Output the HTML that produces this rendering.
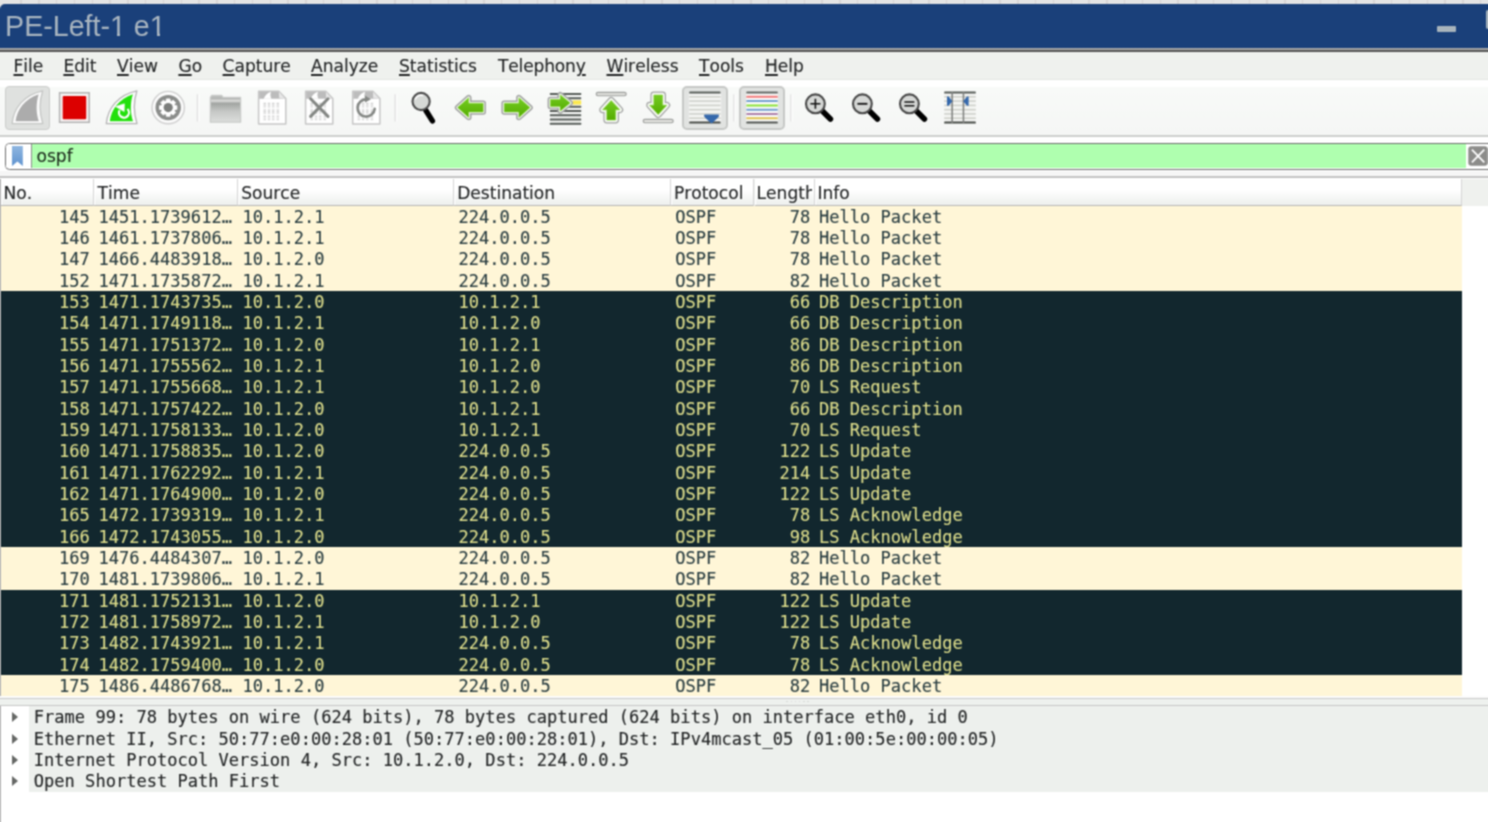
<!DOCTYPE html>
<html lang="en"><head><meta charset="utf-8"><title>PE-Left-1 e1</title>
<style>
html,body{margin:0;padding:0;}
body{width:1488px;height:822px;overflow:hidden;background:#fff;position:relative;font-family:"DejaVu Sans","Liberation Sans",sans-serif;color:#1f2223;}
#ruler{position:absolute;left:0;top:0;width:1488px;height:10px;background:#e4e4e4;background-image:repeating-linear-gradient(90deg,transparent 0,transparent 16.4px,#d8d5d5 16.4px,#d8d5d5 17.8px);background-position:4px 0;}
#titlebar{position:absolute;left:0;top:3.6px;width:1488px;height:44.8px;background:#1a407a;border-top-left-radius:5px;}
#title{position:absolute;left:5.1px;top:5.2px;font-family:"Liberation Sans",sans-serif;font-size:28.6px;line-height:34px;transform:scaleY(1.06);transform-origin:0 78%;color:#a9b5c0;white-space:nowrap;}
#minbtn{position:absolute;left:1437px;top:22.2px;width:18.5px;height:6px;background:#a8b4bc;border-radius:1px;}
#maxbtn{position:absolute;left:1486px;top:6.8px;width:10px;height:18.2px;background:#a8b4bc;border-radius:2px;}
#tbline{position:absolute;left:0;top:48.2px;width:1488px;height:4.1px;background:linear-gradient(#a9a9a9,#a0a0a0 40%,#5a5a5a 62%,#505050);}
#menubar{position:absolute;left:0;top:52.3px;width:1488px;height:28.2px;background:#eff1ee;border-bottom:1.3px solid #e3e6e3;box-sizing:border-box;}
.mi{position:absolute;top:1.8px;font-size:17.07px;line-height:24px;white-space:nowrap;color:#222425;}
.mi u{text-decoration:underline;text-underline-offset:2.4px;text-decoration-thickness:1.6px;}
#toolbar{position:absolute;left:0;top:80.5px;width:1488px;height:56.1px;background:linear-gradient(#ffffff,#ffffff 5.5px,#f8faf8 6.5px,#f5f6f5);border-bottom:2.4px solid #cdcfcd;box-sizing:border-box;}
#toolbar .ic{position:absolute;top:11.5px;width:32px;height:32px;}
#toolbar .sep{position:absolute;top:14px;width:1.3px;height:28px;background:#d6d6d6;}
#toolbar .pressed{position:absolute;top:5.8px;width:44.3px;height:43.8px;background:#dfe1df;border:1.4px solid #cbcdcb;border-radius:4px;box-sizing:border-box;}
#toolbar .p2{width:45.5px;background:#e1e3e1;border:2px solid #c6c8c6;border-radius:5px;}
#tbsvg{position:absolute;left:0;top:-0.5px;}
#filterwrap{position:absolute;left:0;top:136.6px;width:1488px;height:39px;background:linear-gradient(#fff,#fff 33.6px,#f6f6f6 33.6px);}
#filter{position:absolute;left:4.7px;top:6.5px;width:1500px;height:27.4px;background:#fff;border:1.5px solid #6c6c6c;border-radius:4.5px;box-sizing:border-box;overflow:hidden;}
#bm{position:absolute;left:0;top:0;width:25.2px;height:24.4px;background:#fff;border-right:1.2px solid #8c8c8c;}
#bm svg{position:absolute;left:6.4px;top:2.3px;}
#fgreen{position:absolute;left:26.4px;top:0;width:1434.4px;height:24.4px;background:#afffaf;}
#ftext{position:absolute;left:4.4px;top:0.4px;font-size:17.07px;line-height:25px;color:#1c2a1c;}
#fclear{position:absolute;left:1462.2px;top:2px;width:20px;height:20px;}
#fclear svg{display:block;}
#hdrline{position:absolute;left:0;top:175.6px;width:1488px;height:2.6px;background:linear-gradient(#c6c6c6,#c0c0c0);}
#hdr{position:absolute;left:0;top:178.7px;width:1488px;height:27px;background:#eff1ee;}
#hdr:before{content:"";position:absolute;left:0;top:0;width:1.3px;height:27px;background:#b5b5b5;z-index:2;}
.hc{position:absolute;top:0;height:27px;background:linear-gradient(#ffffff,#ffffff 42%,#eef0ee 96%);border-right:1.3px solid #d4d4d4;border-bottom:1.6px solid #b6b6b6;box-sizing:border-box;overflow:hidden;white-space:nowrap;box-shadow:inset 1.2px 0 0 #fff;}
.hc span{position:absolute;left:3.6px;top:3.2px;font-size:17.07px;line-height:22px;color:#222425;}
#list{position:absolute;left:0;top:205.67px;width:1488px;height:490.67px;background:#fff;border-left:1.3px solid #b5b5b5;box-sizing:border-box;}
.r{position:relative;height:21.3333px;width:1461px;font-family:"DejaVu Sans Mono","Liberation Mono",monospace;font-size:17.067px;line-height:21.3333px;white-space:nowrap;}
.r.c{background:#fff6d7;color:#283c40;}
.r.d{background:#12272e;color:#dede8c;}
.r span{position:absolute;top:1.1px;}
.no{left:0;width:88.8px;text-align:right;}
.tm{left:97.5px;}
.sr{left:241.5px;}
.ds{left:457.5px;}
.pr{left:674.2px;}
.ln{left:752px;width:57.4px;text-align:right;}
.in{left:818px;}
#split{position:absolute;left:0;top:696.33px;width:1488px;height:9.9px;background:linear-gradient(#fbfbfb 0,#fbfbfb 1.6px,#c9c9c9 1.6px,#c9c9c9 3px,#eef1ee 3px,#eef1ee 8.5px,#c6c6c6 8.5px,#c6c6c6 9.9px);}
#split i{position:absolute;top:4.6px;width:1.4px;height:1.4px;background:#d3d5d3;border-radius:50%;}
#detail{position:absolute;left:0;top:706.2px;width:1488px;height:116px;background:#fff;border-left:1.3px solid #b5b5b5;box-sizing:border-box;}
.dl{position:relative;height:21.3333px;font-family:"DejaVu Sans Mono","Liberation Mono",monospace;font-size:17.067px;line-height:21.3333px;white-space:nowrap;color:#222425;}
.dl span{position:absolute;left:28px;right:0;top:0;height:21.3333px;background:#edf0ed;padding-left:4.8px;padding-top:1.25px;box-sizing:border-box;line-height:21.3333px;}
.tri{position:absolute;left:11.2px;top:6px;width:0;height:0;border-left:6.2px solid #666866;border-top:5.6px solid transparent;border-bottom:5.6px solid transparent;}

#wrap{position:absolute;left:0;top:0;width:1488px;height:822px;overflow:hidden;background:#fff;font-kerning:none;filter:url(#soft);will-change:transform;}

.r,.dl{-webkit-text-stroke:0.12px currentColor;}
.mi,.hc span,#ftext{-webkit-text-stroke:0.12px currentColor;}

#title b{font-weight:normal;position:relative;}
#title b:before,#title b:after{content:"";position:absolute;top:0.818em;height:0.105em;background:#1a407a;}
#title b:before{left:0.03em;width:0.215em;}
#title b:after{left:0.346em;width:0.2em;}

</style></head><body>
<svg width="0" height="0" style="position:absolute"><defs><filter id="soft" x="0" y="0" width="100%" height="100%" color-interpolation-filters="sRGB"><feConvolveMatrix order="3" kernelMatrix="0.0576 0.1248 0.0576 0.1248 0.2704 0.1248 0.0576 0.1248 0.0576" divisor="1" edgeMode="duplicate" preserveAlpha="true"/></filter></defs></svg>
<div id="wrap">
<div id="ruler"></div>
<div id="titlebar"><span id="title">PE-Left-<b>1</b> e<b>1</b></span><div id="minbtn"></div><div id="maxbtn"></div></div>
<div id="tbline"></div>
<div id="menubar"><span class="mi" style="left:13.5px"><u>F</u>ile</span><span class="mi" style="left:63.4px"><u>E</u>dit</span><span class="mi" style="left:117px"><u>V</u>iew</span><span class="mi" style="left:178.4px"><u>G</u>o</span><span class="mi" style="left:222.6px"><u>C</u>apture</span><span class="mi" style="left:311px"><u>A</u>nalyze</span><span class="mi" style="left:399px"><u>S</u>tatistics</span><span class="mi" style="left:498px;letter-spacing:-0.16px">Telephon<u>y</u></span><span class="mi" style="left:606.5px"><u>W</u>ireless</span><span class="mi" style="left:699px"><u>T</u>ools</span><span class="mi" style="left:765px"><u>H</u>elp</span></div>
<div id="toolbar"><div class="pressed" style="left:5.4px"></div><div class="pressed p2" style="left:682.3px"></div><div class="pressed p2" style="left:739.2px"></div>
<svg id="tbsvg" width="1488" height="56" viewBox="0 80 1488 56">
<defs>
<linearGradient id="gG" x1="0" y1="0" x2="0" y2="1"><stop offset="0" stop-color="#74cc22"/><stop offset="1" stop-color="#55ac00"/></linearGradient>
<linearGradient id="gF" x1="0" y1="0" x2="0" y2="1"><stop offset="0" stop-color="#bfc1bf"/><stop offset="0.12" stop-color="#b4b6b4"/><stop offset="0.2" stop-color="#dededc"/><stop offset="0.3" stop-color="#a2a5a2"/><stop offset="0.6" stop-color="#c6c8c6"/><stop offset="1" stop-color="#dcdedc"/></linearGradient>
<linearGradient id="gL" x1="0" y1="0" x2="0" y2="1"><stop offset="0" stop-color="#cfd1cf"/><stop offset="1" stop-color="#dfe0df"/></linearGradient>
<path id="fin" d="M12.1 123.7 C13.5 108 24 94.8 42.7 90.8 C39.4 101 39.4 113 42.8 123.7 Z"/>
<path id="fini" d="M15.6 121.2 C16.9 109.5 25 98.8 38.7 94.2 C35.9 103 35.9 113 38.8 121.2 Z"/>
<g id="doc"><path d="M-13.6 -16.3 H6.6 L13.6 -9 V16.3 H-13.6 Z" fill="#fff" stroke="#c6c6c6" stroke-width="1.5" stroke-linejoin="round"/><path d="M-13 -15.8 H6.4 L13 -8.8 H-13 Z" fill="#bcbcbc"/><path d="M-8.5 -8.8 C-7 -12.5 -4.5 -14.8 -1.2 -15.8 C-2 -13.5 -2 -11 -0.8 -8.8 Z" fill="#fff"/><path d="M6.6 -15.8 L7 -9.3 L13 -8.9 Z" fill="#e6e6e6"/></g>
<g id="bits" fill="none" stroke="#d2d2d2" stroke-width="1.1"><path d="M-7.5 -4.8v4.6M-3.2 -4.8v4.6M1 -4.8v4.6M5.6 -4.8v4.6M-7.5 1.6v4.6M-3.2 1.6v4.6M1 1.6v4.6M5.6 1.6v4.6M-7.5 8v4.6M-3.2 8v4.6M1 8v4.6M5.6 8v4.6" stroke-width="2.6" stroke-dasharray="1.2 0.6"/></g>
<g id="mag"><line x1="5.2" y1="5.4" x2="15" y2="15.2" stroke="#000" stroke-width="5.6" stroke-linecap="round"/><circle cx="0" cy="0" r="9.4" fill="#d6d8d6" stroke="#484848" stroke-width="2.1"/></g>
</defs>
<use href="#fin" fill="#fbfbfb" stroke="#c4c6c4" stroke-width="1.3" stroke-linejoin="round"/><use href="#fini" fill="#acacac"/>
<rect x="59.6" y="92.8" width="29.6" height="29.5" fill="#f6f2f2" stroke="#b2b2b2" stroke-width="1.5"/><rect x="62.7" y="96" width="23.5" height="23.2" rx="1" fill="#dc0000"/>
<g transform="translate(94.2,0)"><use href="#fin" fill="#fdfdfd" stroke="#b4b4b4" stroke-width="1.3" stroke-linejoin="round"/><use href="#fini" fill="#22e00c"/></g>
<g fill="none" stroke="#fff" stroke-width="2.2"><path d="M127.4 109 A5 5 0 1 1 119.6 110.2"/></g><path d="M115.6 106.6 L124.4 103.8 L124.2 111.6 L121.4 110 Z" fill="#fff" stroke="#fff" stroke-width="0.6" stroke-linejoin="round"/>
<circle cx="168.2" cy="107.6" r="16.2" fill="#fbfbfb" stroke="#cfcfcf" stroke-width="1.4"/><circle cx="168.2" cy="107.6" r="12.7" fill="#8b8d8b"/>
<path d="M166.43 98.88 L169.97 98.88 L170.24 101.01 L171.42 101.50 L173.12 100.18 L175.62 102.68 L174.30 104.38 L174.79 105.56 L176.92 105.83 L176.92 109.37 L174.79 109.64 L174.30 110.82 L175.62 112.52 L173.12 115.02 L171.42 113.70 L170.24 114.19 L169.97 116.32 L166.43 116.32 L166.16 114.19 L164.98 113.70 L163.28 115.02 L160.78 112.52 L162.10 110.82 L161.61 109.64 L159.48 109.37 L159.48 105.83 L161.61 105.56 L162.10 104.38 L160.78 102.68 L163.28 100.18 L164.98 101.50 L166.16 101.01 Z" fill="#fff" stroke="#fff" stroke-width="0.8" stroke-linejoin="round"/>
<circle cx="168.2" cy="107.6" r="4.6" fill="#7c7e7c"/>
<rect x="196.8" y="94.3" width="1.4" height="27.2" fill="#e0e0e0"/><rect x="198.2" y="94.3" width="1.3" height="27.2" fill="#fdfdfd"/>
<rect x="394.5" y="94.3" width="1.4" height="27.2" fill="#e0e0e0"/><rect x="395.9" y="94.3" width="1.3" height="27.2" fill="#fdfdfd"/>
<rect x="733.1999999999999" y="94.3" width="1.4" height="27.2" fill="#e0e0e0"/><rect x="734.6" y="94.3" width="1.3" height="27.2" fill="#fdfdfd"/>
<rect x="790.1999999999999" y="94.3" width="1.4" height="27.2" fill="#e0e0e0"/><rect x="791.6" y="94.3" width="1.3" height="27.2" fill="#fdfdfd"/>
<path d="M210.4 97.4 L211.8 95.4 H221.6 L223 97.4 H240.6 V122.2 H210.4 Z" fill="url(#gF)" stroke="#c9cbc9" stroke-width="1.3" stroke-linejoin="round"/>
<g transform="translate(272.2,107.6)"><use href="#doc"/><use href="#bits"/></g>
<g transform="translate(319.2,107.6)"><use href="#doc"/><use href="#bits"/><path d="M-8.6 -8.8 L8.8 8.8 M8.8 -8.8 L-8.6 8.8" stroke="#848784" stroke-width="3" stroke-linecap="round" fill="none"/></g>
<g transform="translate(366.3,107.6)"><use href="#doc"/><use href="#bits"/><path d="M8.4 1.2 A8.6 8.6 0 1 1 0.4 -8.2" stroke="#858885" stroke-width="2.6" fill="none" stroke-linecap="round"/><path d="M-1.5 -12 L4.6 -8.4 L-1.2 -5.2 Z" fill="#858885"/></g>
<g transform="translate(421.1,101.5)"><line x1="4.8" y1="9" x2="11.3" y2="19.4" stroke="#000" stroke-width="5.4" stroke-linecap="round"/><circle cx="0" cy="0" r="8.6" fill="#d6d9d6" stroke="#4c4c4c" stroke-width="2.1"/><path d="M-5.6 -2.6 A6.3 6.3 0 0 1 1.6 -6" stroke="#fff" stroke-width="1.4" fill="none" stroke-linecap="round"/></g>
<path d="M457.6 107.6 L468.7 97.7 V103.2 H483.2 V112 H468.7 V117.5 Z" fill="#a2a4a2" stroke="#a2a4a2" stroke-width="5.6" stroke-linejoin="round"/><path d="M457.6 107.6 L468.7 97.7 V103.2 H483.2 V112 H468.7 V117.5 Z" fill="#f6f8f4" stroke="#f6f8f4" stroke-width="2.6" stroke-linejoin="round"/><path d="M457.6 107.6 L468.7 97.7 V103.2 H483.2 V112 H468.7 V117.5 Z" fill="url(#gG)" stroke="#7fd42a" stroke-width="0.5" stroke-linejoin="round"/>
<path d="M530 107.6 L518.9 97.7 V103.2 H504.2 V112 H518.9 V117.5 Z" fill="#a2a4a2" stroke="#a2a4a2" stroke-width="5.6" stroke-linejoin="round"/><path d="M530 107.6 L518.9 97.7 V103.2 H504.2 V112 H518.9 V117.5 Z" fill="#f6f8f4" stroke="#f6f8f4" stroke-width="2.6" stroke-linejoin="round"/><path d="M530 107.6 L518.9 97.7 V103.2 H504.2 V112 H518.9 V117.5 Z" fill="url(#gG)" stroke="#7fd42a" stroke-width="0.5" stroke-linejoin="round"/>
<rect x="549.9" y="92.95" width="31.3" height="2.1" rx="0.6" fill="#565c58"/>
<rect x="549.9" y="97.25" width="31.3" height="2.1" rx="0.6" fill="#565c58"/>
<rect x="549.9" y="105.75" width="31.3" height="2.1" rx="0.6" fill="#565c58"/>
<rect x="549.9" y="109.95" width="31.3" height="2.1" rx="0.6" fill="#565c58"/>
<rect x="549.9" y="114.25" width="31.3" height="2.1" rx="0.6" fill="#565c58"/>
<rect x="549.9" y="118.45" width="31.3" height="2.1" rx="0.6" fill="#565c58"/>
<rect x="549.9" y="122.75" width="31.3" height="2.1" rx="0.6" fill="#565c58"/>
<rect x="572.6" y="100.4" width="8.6" height="4.2" fill="#fce94f"/>
<path d="M570.2 102.9 L560.2 94.8 V99.5 H550.4 V106.5 H560.2 V111 Z" fill="#a2a4a2" stroke="#a2a4a2" stroke-width="5.6" stroke-linejoin="round"/><path d="M570.2 102.9 L560.2 94.8 V99.5 H550.4 V106.5 H560.2 V111 Z" fill="#f6f8f4" stroke="#f6f8f4" stroke-width="2.6" stroke-linejoin="round"/><path d="M570.2 102.9 L560.2 94.8 V99.5 H550.4 V106.5 H560.2 V111 Z" fill="url(#gG)" stroke="#7fd42a" stroke-width="0.5" stroke-linejoin="round"/>
<rect x="596.2" y="92.4" width="30" height="3.4" rx="1.7" fill="#dededa" stroke="#9c9e9c" stroke-width="1.1"/>
<path d="M611.2 100.4 L619.8 109.8 H615.6 V120 H606.8 V109.8 H602.6 Z" fill="#a2a4a2" stroke="#a2a4a2" stroke-width="6.8" stroke-linejoin="round"/><path d="M611.2 100.4 L619.8 109.8 H615.6 V120 H606.8 V109.8 H602.6 Z" fill="#f6f8f4" stroke="#f6f8f4" stroke-width="4.4" stroke-linejoin="round"/><path d="M611.2 100.4 L619.8 109.8 H615.6 V120 H606.8 V109.8 H602.6 Z" fill="url(#gG)" stroke="#7fd42a" stroke-width="0.5" stroke-linejoin="round"/>
<rect x="643.2" y="119.4" width="30" height="3.4" rx="1.7" fill="#e4e4e0" stroke="#9c9e9c" stroke-width="1.1"/>
<path d="M658.2 114.6 L666.8 105.2 H662.6 V95 H653.8 V105.2 H649.6 Z" fill="#a2a4a2" stroke="#a2a4a2" stroke-width="6.8" stroke-linejoin="round"/><path d="M658.2 114.6 L666.8 105.2 H662.6 V95 H653.8 V105.2 H649.6 Z" fill="#f6f8f4" stroke="#f6f8f4" stroke-width="4.4" stroke-linejoin="round"/><path d="M658.2 114.6 L666.8 105.2 H662.6 V95 H653.8 V105.2 H649.6 Z" fill="url(#gG)" stroke="#7fd42a" stroke-width="0.5" stroke-linejoin="round"/>
<rect x="688.8" y="91.4" width="32.4" height="32.4" fill="#f4f5f3"/>
<rect x="689.2" y="96.0" width="31.4" height="1.6" fill="#cfd1cb"/>
<rect x="689.2" y="100.3" width="31.4" height="1.6" fill="#cfd1cb"/>
<rect x="689.2" y="104.60000000000001" width="31.4" height="1.6" fill="#cfd1cb"/>
<rect x="689.2" y="108.9" width="31.4" height="1.6" fill="#cfd1cb"/>
<rect x="689.2" y="113.10000000000001" width="31.4" height="1.6" fill="#cfd1cb"/>
<rect x="689.2" y="117.4" width="31.4" height="1.6" fill="#cfd1cb"/>
<rect x="689.2" y="91.6" width="31.4" height="2" rx="0.6" fill="#555b57"/><rect x="689.2" y="121.6" width="31.4" height="2" rx="0.6" fill="#444844"/>
<path d="M704 115.2 Q704 114.6 705 114.6 H718 Q719 114.6 719 115.4 Q719 116.6 717.8 117.8 L712.5 122.8 Q711.5 123.6 710.5 122.8 L705.2 117.8 Q704 116.6 704 115.2 Z" fill="#3568ab"/>
<rect x="746.3" y="91.4" width="31.5" height="32.4" fill="#fbfbfa"/>
<rect x="746.3" y="91.6" width="31.5" height="2" rx="0.6" fill="#5d635f"/>
<rect x="746.3" y="95.8" width="31.5" height="2" rx="0.6" fill="#f27a7a"/>
<rect x="746.3" y="100.1" width="31.5" height="2" rx="0.6" fill="#729fcf"/>
<rect x="746.3" y="104.4" width="31.5" height="2" rx="0.6" fill="#8ae234"/>
<rect x="746.3" y="108.7" width="31.5" height="2" rx="0.6" fill="#729fcf"/>
<rect x="746.3" y="112.9" width="31.5" height="2" rx="0.6" fill="#ad7fa8"/>
<rect x="746.3" y="117.2" width="31.5" height="2" rx="0.6" fill="#dfc24e"/>
<rect x="746.3" y="121.6" width="31.5" height="2" rx="0.6" fill="#4c504c"/>
<g transform="translate(815.4,103.8)"><use href="#mag"/>
<path d="M-5 0H5M0 -5V5" stroke="#111" stroke-width="1.6" fill="none"/>
</g>
<g transform="translate(862.4,103.8)"><use href="#mag"/>
<path d="M-5 0H5" stroke="#111" stroke-width="1.8" fill="none"/>
</g>
<g transform="translate(909.4,103.8)"><use href="#mag"/>
<path d="M-5 -1.9H5M-5 1.9H5" stroke="#111" stroke-width="1.5" fill="none"/>
</g>
<rect x="944.2" y="91.4" width="31.6" height="32.4" fill="#f4f5f3"/>
<rect x="944.2" y="96.0" width="31.6" height="1.6" fill="#cfd1cb"/>
<rect x="944.2" y="100.3" width="31.6" height="1.6" fill="#cfd1cb"/>
<rect x="944.2" y="104.60000000000001" width="31.6" height="1.6" fill="#cfd1cb"/>
<rect x="944.2" y="108.9" width="31.6" height="1.6" fill="#cfd1cb"/>
<rect x="944.2" y="113.10000000000001" width="31.6" height="1.6" fill="#cfd1cb"/>
<rect x="944.2" y="117.4" width="31.6" height="1.6" fill="#cfd1cb"/>
<rect x="944.2" y="91.6" width="31.6" height="2" rx="0.6" fill="#555b57"/><rect x="944.2" y="121.6" width="31.6" height="2" rx="0.6" fill="#444844"/>
<rect x="951.4" y="92" width="1.5" height="31" fill="#7c7e7c"/><rect x="962.7" y="92" width="1.5" height="31" fill="#7c7e7c"/>
<path d="M947 96.6 H948.6 L952.4 101.2 L948.6 105.8 H947 Z" fill="#3568ab"/><path d="M968.6 96.6 H967 L963.2 101.2 L967 105.8 H968.6 Z" fill="#3568ab"/>
</svg></div>
<div id="filterwrap"><div id="filter"><div id="bm"><svg width="10.8" height="20" viewBox="0 0 10.8 20"><defs><linearGradient id="bmg" x1="0" y1="0" x2="0" y2="1"><stop offset="0" stop-color="#8fb6e0"/><stop offset="1" stop-color="#5f93cf"/></linearGradient></defs><path d="M0 0h10.8v20l-5.4-4.4L0 20z" fill="url(#bmg)"/></svg></div><div id="fgreen"><span id="ftext">ospf</span></div><div id="fclear"><svg width="20" height="20" viewBox="0 0 20 20"><rect x="0.3" y="0.2" width="19.4" height="19.6" rx="3" fill="#8c8c8a"/><path d="M3.9 3.6l12.4 12.8M16.3 3.6l-12.4 12.8" stroke="#fff" stroke-width="1.7" fill="none"/></svg></div></div></div>
<div id="hdrline"></div><div id="hdr"><div class="hc" style="left:1px;width:93px"><span style="left:2.6px">No.</span></div><div class="hc" style="left:94px;width:144px"><span style="left:3.6px">Time</span></div><div class="hc" style="left:238px;width:216px"><span style="left:3.2px">Source</span></div><div class="hc" style="left:454px;width:217.29999999999995px"><span style="left:3.2px">Destination</span></div><div class="hc" style="left:671.3px;width:83.20000000000005px"><span style="left:2.65px">Protocol</span></div><div class="hc" style="left:754.5px;width:60.0px"><span style="left:2.1px;width:55px;overflow:hidden">Length</span></div><div class="hc" style="left:814.5px;width:647.5px"><span style="left:3.0px">Info</span></div></div>
<div id="list"><div class="r c"><span class="no">145</span><span class="tm">1451.1739612…</span><span class="sr">10.1.2.1</span><span class="ds">224.0.0.5</span><span class="pr">OSPF</span><span class="ln">78</span><span class="in">Hello Packet</span></div><div class="r c"><span class="no">146</span><span class="tm">1461.1737806…</span><span class="sr">10.1.2.1</span><span class="ds">224.0.0.5</span><span class="pr">OSPF</span><span class="ln">78</span><span class="in">Hello Packet</span></div><div class="r c"><span class="no">147</span><span class="tm">1466.4483918…</span><span class="sr">10.1.2.0</span><span class="ds">224.0.0.5</span><span class="pr">OSPF</span><span class="ln">78</span><span class="in">Hello Packet</span></div><div class="r c"><span class="no">152</span><span class="tm">1471.1735872…</span><span class="sr">10.1.2.1</span><span class="ds">224.0.0.5</span><span class="pr">OSPF</span><span class="ln">82</span><span class="in">Hello Packet</span></div><div class="r d"><span class="no">153</span><span class="tm">1471.1743735…</span><span class="sr">10.1.2.0</span><span class="ds">10.1.2.1</span><span class="pr">OSPF</span><span class="ln">66</span><span class="in">DB Description</span></div><div class="r d"><span class="no">154</span><span class="tm">1471.1749118…</span><span class="sr">10.1.2.1</span><span class="ds">10.1.2.0</span><span class="pr">OSPF</span><span class="ln">66</span><span class="in">DB Description</span></div><div class="r d"><span class="no">155</span><span class="tm">1471.1751372…</span><span class="sr">10.1.2.0</span><span class="ds">10.1.2.1</span><span class="pr">OSPF</span><span class="ln">86</span><span class="in">DB Description</span></div><div class="r d"><span class="no">156</span><span class="tm">1471.1755562…</span><span class="sr">10.1.2.1</span><span class="ds">10.1.2.0</span><span class="pr">OSPF</span><span class="ln">86</span><span class="in">DB Description</span></div><div class="r d"><span class="no">157</span><span class="tm">1471.1755668…</span><span class="sr">10.1.2.1</span><span class="ds">10.1.2.0</span><span class="pr">OSPF</span><span class="ln">70</span><span class="in">LS Request</span></div><div class="r d"><span class="no">158</span><span class="tm">1471.1757422…</span><span class="sr">10.1.2.0</span><span class="ds">10.1.2.1</span><span class="pr">OSPF</span><span class="ln">66</span><span class="in">DB Description</span></div><div class="r d"><span class="no">159</span><span class="tm">1471.1758133…</span><span class="sr">10.1.2.0</span><span class="ds">10.1.2.1</span><span class="pr">OSPF</span><span class="ln">70</span><span class="in">LS Request</span></div><div class="r d"><span class="no">160</span><span class="tm">1471.1758835…</span><span class="sr">10.1.2.0</span><span class="ds">224.0.0.5</span><span class="pr">OSPF</span><span class="ln">122</span><span class="in">LS Update</span></div><div class="r d"><span class="no">161</span><span class="tm">1471.1762292…</span><span class="sr">10.1.2.1</span><span class="ds">224.0.0.5</span><span class="pr">OSPF</span><span class="ln">214</span><span class="in">LS Update</span></div><div class="r d"><span class="no">162</span><span class="tm">1471.1764900…</span><span class="sr">10.1.2.0</span><span class="ds">224.0.0.5</span><span class="pr">OSPF</span><span class="ln">122</span><span class="in">LS Update</span></div><div class="r d"><span class="no">165</span><span class="tm">1472.1739319…</span><span class="sr">10.1.2.1</span><span class="ds">224.0.0.5</span><span class="pr">OSPF</span><span class="ln">78</span><span class="in">LS Acknowledge</span></div><div class="r d"><span class="no">166</span><span class="tm">1472.1743055…</span><span class="sr">10.1.2.0</span><span class="ds">224.0.0.5</span><span class="pr">OSPF</span><span class="ln">98</span><span class="in">LS Acknowledge</span></div><div class="r c"><span class="no">169</span><span class="tm">1476.4484307…</span><span class="sr">10.1.2.0</span><span class="ds">224.0.0.5</span><span class="pr">OSPF</span><span class="ln">82</span><span class="in">Hello Packet</span></div><div class="r c"><span class="no">170</span><span class="tm">1481.1739806…</span><span class="sr">10.1.2.1</span><span class="ds">224.0.0.5</span><span class="pr">OSPF</span><span class="ln">82</span><span class="in">Hello Packet</span></div><div class="r d"><span class="no">171</span><span class="tm">1481.1752131…</span><span class="sr">10.1.2.0</span><span class="ds">10.1.2.1</span><span class="pr">OSPF</span><span class="ln">122</span><span class="in">LS Update</span></div><div class="r d"><span class="no">172</span><span class="tm">1481.1758972…</span><span class="sr">10.1.2.1</span><span class="ds">10.1.2.0</span><span class="pr">OSPF</span><span class="ln">122</span><span class="in">LS Update</span></div><div class="r d"><span class="no">173</span><span class="tm">1482.1743921…</span><span class="sr">10.1.2.1</span><span class="ds">224.0.0.5</span><span class="pr">OSPF</span><span class="ln">78</span><span class="in">LS Acknowledge</span></div><div class="r d"><span class="no">174</span><span class="tm">1482.1759400…</span><span class="sr">10.1.2.0</span><span class="ds">224.0.0.5</span><span class="pr">OSPF</span><span class="ln">78</span><span class="in">LS Acknowledge</span></div><div class="r c"><span class="no">175</span><span class="tm">1486.4486768…</span><span class="sr">10.1.2.0</span><span class="ds">224.0.0.5</span><span class="pr">OSPF</span><span class="ln">82</span><span class="in">Hello Packet</span></div></div>
<div id="split"><i style="left:786.2px"></i><i style="left:790.5px"></i><i style="left:794.7px"></i><i style="left:798.9px"></i><i style="left:803.2px"></i><i style="left:807.4px"></i></div>
<div id="detail"><div class="dl"><i class="tri"></i><span>Frame 99: 78 bytes on wire (624 bits), 78 bytes captured (624 bits) on interface eth0, id 0</span></div><div class="dl"><i class="tri"></i><span>Ethernet II, Src: 50:77:e0:00:28:01 (50:77:e0:00:28:01), Dst: IPv4mcast_05 (01:00:5e:00:00:05)</span></div><div class="dl"><i class="tri"></i><span>Internet Protocol Version 4, Src: 10.1.2.0, Dst: 224.0.0.5</span></div><div class="dl"><i class="tri"></i><span>Open Shortest Path First</span></div></div>
</div>
</body></html>
